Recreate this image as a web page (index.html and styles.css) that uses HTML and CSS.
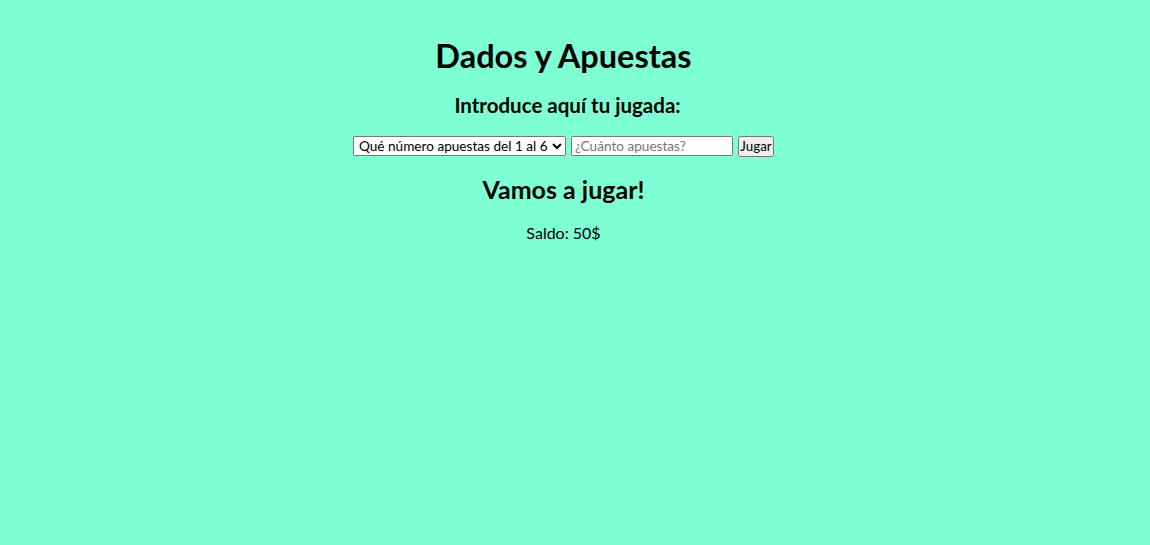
FILE: index.html
```html
<!DOCTYPE html>
<html lang="es">
<head>
<meta charset="utf-8">
<title>Dados y Apuestas</title>
<link rel="stylesheet" href="styles.css">
</head>
<body>
<main class="page">
  <h1 class="title">Dados y Apuestas</h1>
  <h3 class="subtitle">Introduce aquí tu jugada:</h3>
  <form class="play-form">
    <select class="bet-number">
      <option>Qué número apuestas del 1 al 6</option>
      <option>1</option><option>2</option><option>3</option>
      <option>4</option><option>5</option><option>6</option>
    </select>
    <input class="bet-amount" type="text" placeholder="¿Cuánto apuestas?">
    <button class="play-btn" type="button">Jugar</button>
  </form>
  <h2 class="status">Vamos a jugar!</h2>
  <p class="balance">Saldo: 50$</p>
</main>
</body>
</html>
```
FILE: styles.css
```css
html, body {
  background: #7fffd4;
}
body {
  margin: 8px;
  font-family: Lato, "Open Sans", sans-serif;
  color: #000;
  line-height: 1.16;
}
.page {
  text-align: center;
  padding: 8px 23px 0 0;
}
.title {
  font-size: 32.5px;
  margin: 21.44px 0 19px;
}
.subtitle {
  font-size: 20.5px;
  margin: 19px 0 18px;
  padding-left: 8px;
}
.play-form {
  display: flex;
  justify-content: center;
  align-items: center;
  gap: 5px;
}
.bet-number, .bet-amount, .play-btn {
  font-family: Lato, "Open Sans", sans-serif;
  font-size: 13.6px;
  height: 20px;
  box-sizing: border-box;
  margin: 0;
}
.bet-number {
  width: 213px;
  padding: 0 0 0 1px;
}
.bet-amount {
  width: 162px;
  padding: 1px 2px;
}
.play-btn {
  width: 36px;
  height: 21px;
  padding: 0;
  font-size: 13.33px;
}
.status {
  font-size: 25px;
  margin: 18px 0 19px;
}
.balance {
  font-size: 16px;
  margin: 20px 0 16px;
}
```
